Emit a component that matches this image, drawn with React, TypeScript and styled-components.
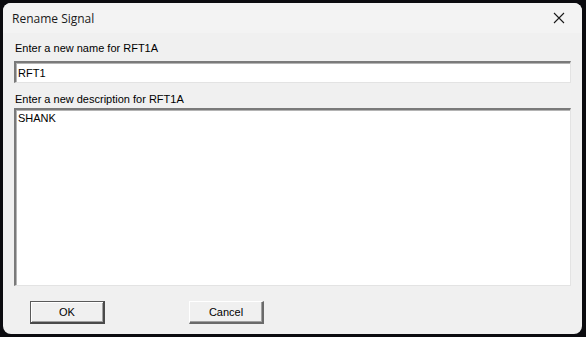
import React, { useState } from "react";
import styled, { createGlobalStyle } from "styled-components";

const GlobalStyle = createGlobalStyle`
  html, body {
    margin: 0;
    padding: 0;
    background: #0b0b0f;
  }
  #root {
    width: 586px;
    height: 337px;
    overflow: hidden;
  }
`;

const App = () => {
  const [name, setName] = useState("RFT1");
  const [description, setDescription] = useState("SHANK");

  return (
    <>
      <GlobalStyle />
      <Screen>
        <Window>
          <TitleBar>
            <Title>Rename Signal</Title>
            <CloseButton aria-label="Close">
              <svg width="12" height="12" viewBox="0 0 12 12">
                <path d="M1 1 L11 11 M11 1 L1 11" stroke="#1a1a1a" strokeWidth="1.1" fill="none" />
              </svg>
            </CloseButton>
          </TitleBar>
          <Body>
            <Label>Enter a new name for RFT1A</Label>
            <NameInput value={name} onChange={(e) => setName(e.target.value)} />
            <Label $gap>Enter a new description for RFT1A</Label>
            <DescriptionArea value={description} onChange={(e) => setDescription(e.target.value)} />
            <ButtonRow>
              <DialogButton $default>OK</DialogButton>
              <DialogButton>Cancel</DialogButton>
            </ButtonRow>
          </Body>
        </Window>
      </Screen>
    </>
  );
};

const Screen = styled.div`
  width: 586px;
  height: 337px;
  padding: 3px 4px 3px 3px;
  box-sizing: border-box;
`;

const Window = styled.div`
  width: 579px;
  height: 331px;
  background: #f0f0f0;
  border-radius: 8px;
  overflow: hidden;
  display: flex;
  flex-direction: column;
`;

const TitleBar = styled.div`
  height: 30px;
  flex: none;
  background: #f3f3f3;
  display: flex;
  align-items: center;
  justify-content: space-between;
  padding: 0 0 0 9px;
`;

const Title = styled.div`
  font-family: "Open Sans", "Liberation Sans", sans-serif;
  font-size: 12px;
  color: #1a1a1a;
  margin-top: 1px;
`;

const CloseButton = styled.button`
  width: 46px;
  height: 30px;
  border: none;
  background: transparent;
  display: flex;
  align-items: center;
  justify-content: center;
  padding: 0;
`;

const Body = styled.div`
  flex: 1;
  display: flex;
  flex-direction: column;
  padding: 9px 11px 0 11px;
  font-family: "Liberation Sans", Arial, sans-serif;
  font-size: 11px;
  color: #000;
`;

const Label = styled.div<{ $gap?: boolean }>`
  height: 13px;
  line-height: 13px;
  padding-left: 1px;
  margin-top: ${(p) => (p.$gap ? "10px" : "0")};
  margin-bottom: ${(p) => (p.$gap ? "2px" : "6px")};
`;

const sunken = `
  box-sizing: border-box;
  width: 557px;
  border-style: solid;
  border-width: 2px 1px 1px 2px;
  border-color: #7a7a7a #e3e3e3 #e3e3e3 #7a7a7a;
  box-shadow: inset 1px 1px 0 #b4b4b4;
  background: #fff;
  font-family: "Liberation Sans", Arial, sans-serif;
  font-size: 11px;
  color: #000;
  outline: none;
  padding: 1px 2px;
  margin: 0;
`;

const NameInput = styled.input`
  ${sunken};
  height: 22px;
`;

const DescriptionArea = styled.textarea`
  ${sunken};
  height: 178px;
  resize: none;
  padding: 2px 2px;
  overflow: hidden;
`;

const ButtonRow = styled.div`
  display: flex;
  gap: 84px;
  padding: 15px 0 0 16px;
`;

const DialogButton = styled.button<{ $default?: boolean }>`
  width: 75px;
  height: 23px;
  box-sizing: border-box;
  background: #f0f0f0;
  font-family: "Liberation Sans", Arial, sans-serif;
  font-size: 11px;
  color: #000;
  padding: 0;
  border-style: solid;
  border-width: 1px 2px 2px 1px;
  border-color: ${(p) =>
    p.$default ? "#5a5a5a #4a4a4a #4a4a4a #5a5a5a" : "#ffffff #6a6a6a #6a6a6a #ffffff"};
  box-shadow: ${(p) =>
    p.$default ? "inset 1px 1px 0 #ffffff, inset -1px -1px 0 #a0a0a0" : "inset -1px -1px 0 #a0a0a0"};
`;

export default App;
